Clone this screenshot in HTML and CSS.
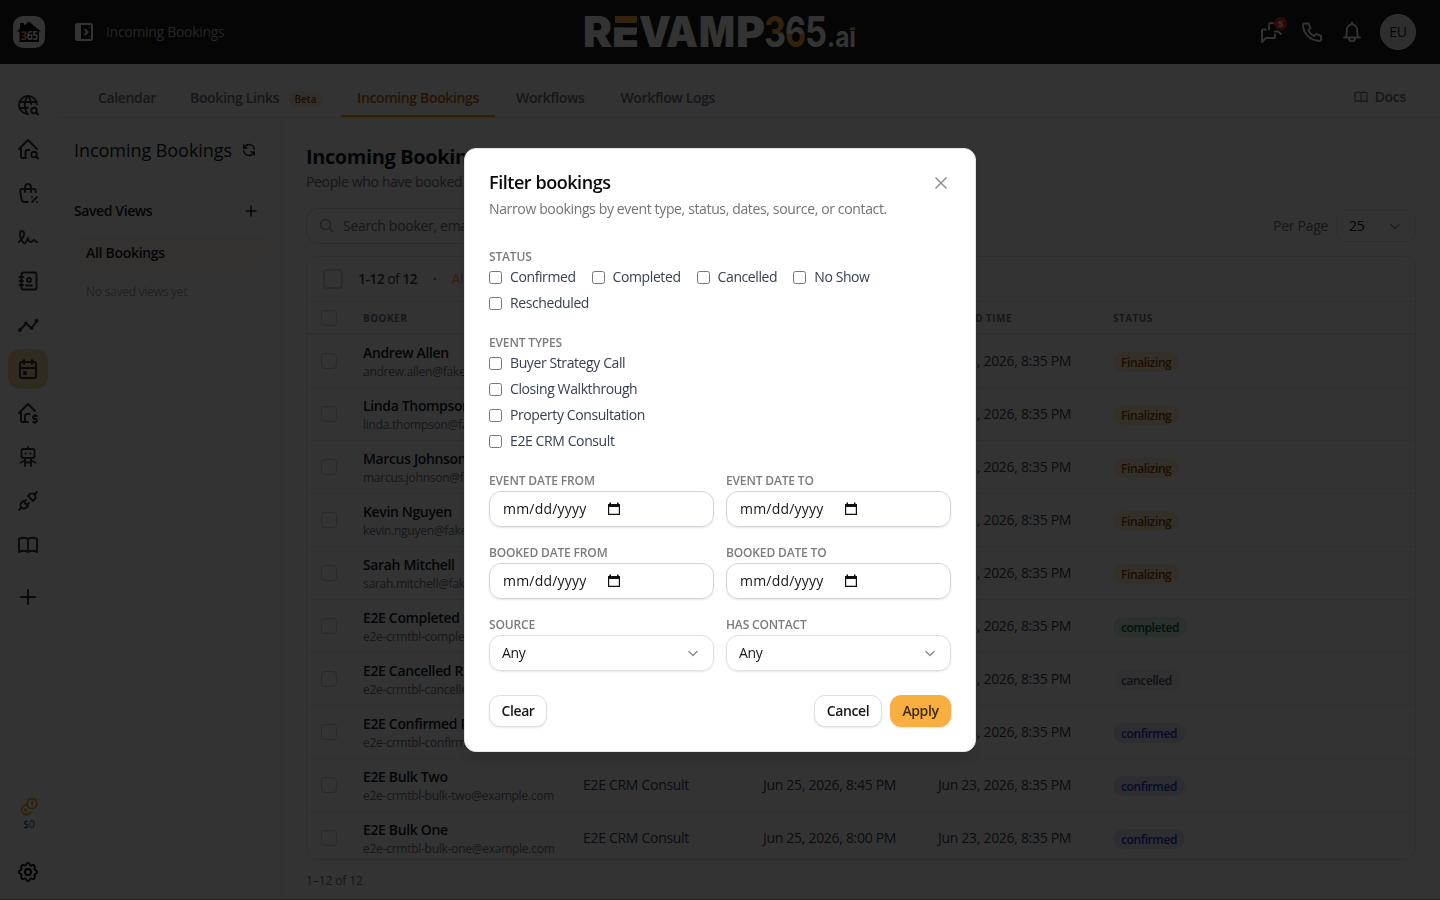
FILE: index.html
```html
<!DOCTYPE html>
<html lang="en">
<head>
<meta charset="utf-8">
<title>Incoming Bookings</title>
<link rel="stylesheet" href="styles.css">
</head>
<body>
<div class="app">
  <header class="topbar">
    <svg class="logo" width="32" height="32" viewBox="0 0 32 32"><rect width="32" height="32" rx="10" fill="#fff"/><path d="M4 15.500L7 12.500V7h4v2.500L16 5.500l12 10H26V26H6.500V15.500z" fill="#050505"/><text x="8" y="24" font-size="12" font-weight="700" textLength="17" lengthAdjust="spacingAndGlyphs" fill="#fff"><tspan fill="#f9ae41">3</tspan>65</text></svg>
    <svg class="panel-icon" width="18" height="18" viewBox="0 0 18 18"><rect x="1" y="1" width="16" height="16" rx="1.500" fill="none" stroke="#fff" stroke-width="2"/><path d="M1 1h5v16H1z" fill="#fff"/><path d="M9.500 6l3 3-3 3" fill="none" stroke="#fff" stroke-width="1.800"/></svg>
    <span class="crumb">Incoming Bookings</span>
    <svg class="brand" width="272" height="36" viewBox="584 14 272 36">
      <defs>
        <linearGradient id="three" gradientUnits="userSpaceOnUse" x1="0" y1="16" x2="0" y2="48"><stop offset=".56" stop-color="#f9ae41"/><stop offset=".56" stop-color="#fff"/></linearGradient>
        <linearGradient id="six" gradientUnits="userSpaceOnUse" x1="0" y1="16" x2="0" y2="48"><stop offset=".56" stop-color="#fff"/><stop offset=".56" stop-color="#f9ae41"/></linearGradient>
      </defs>
      <g class="wordmark">
        <text x="583" y="47" textLength="29" lengthAdjust="spacingAndGlyphs">R</text>
        <text x="612" y="47" textLength="27" lengthAdjust="spacingAndGlyphs">E</text>
        <text x="639" y="47" textLength="32" lengthAdjust="spacingAndGlyphs">V</text>
        <text x="666" y="47" textLength="32" lengthAdjust="spacingAndGlyphs">A</text>
        <text x="699" y="47" textLength="36" lengthAdjust="spacingAndGlyphs">M</text>
        <text x="736" y="47" textLength="29" lengthAdjust="spacingAndGlyphs">P</text>
      </g>
      <rect x="613" y="15" width="26" height="12.500" fill="#191919"/><rect x="615" y="16" width="22" height="7" fill="#f9ae41"/><rect x="615" y="27.500" width="22" height="5.500" fill="#fff"/>
      <g class="numerals">
        <text x="764" y="47" textLength="22" lengthAdjust="spacingAndGlyphs" fill="url(#three)">3</text>
        <text x="785" y="47" textLength="21" lengthAdjust="spacingAndGlyphs" fill="url(#six)">6</text>
        <text x="805" y="47" textLength="22" lengthAdjust="spacingAndGlyphs" fill="#fff">5</text>
      </g>
      <text class="suffix" x="827" y="46.500" textLength="29" lengthAdjust="spacingAndGlyphs">.ai</text>
      <path d="M849 23h7v7h-7z" fill="#191919"/><path d="M850 28.500l1-1.500h4v3h-5z" fill="#f9ae41"/>
    </svg>
    <div class="actions">
      <span class="chat"><svg class="ic" width="24" height="24" viewBox="0 0 24 24"><path d="M9 9.500V4.500C9 3.700 9.700 3 10.500 3H13M21 14l-3-2.500h-3M15 14.500V17a1 1 0 0 1-1 1H6l-4 4V10.500a1 1 0 0 1 1-1h3"/></svg><b class="count">5</b></span>
      <svg class="ic" width="24" height="24" viewBox="0 0 24 24"><path d="M8.500 3.500H4.500a1.500 1.500 0 0 0-1.500 1.600C3.600 14 10 20.400 19.200 21a1.600 1.600 0 0 0 1.800-1.600v-3.600l-4.600-2-2.400 2.400C11.800 15 9.500 12.700 8.200 10.400l2.400-2.300z"/></svg>
      <svg class="ic" width="24" height="24" viewBox="0 0 24 24"><path d="M12 2.500v1.800M4 17.500h16M5.500 17.500c1.200-1.500 1.300-3 1.300-7 0-3.700 2.200-6 5.200-6s5.200 2.300 5.200 6c0 4 .1 5.500 1.300 7M9 18c0 4.500 6 4.500 6 0"/></svg>
      <span class="avatar">EU</span>
    </div>
  </header>
  <div class="shell">
    <nav class="rail">
      <div class="rail-items">
        <span class="rail-item"><svg class="ic" width="24" height="24" viewBox="0 0 24 24"><path d="M21 11.500A9 9 0 1 0 12 21M3.600 9h16.800M3.600 15H12M11.500 3a17 17 0 0 0 0 18M12.500 3a17 17 0 0 1 2.500 8"/><circle cx="18" cy="17.500" r="2.800"/><path d="M20 19.500l2 2"/></svg></span>
        <span class="rail-item"><svg class="ic" width="24" height="24" viewBox="0 0 24 24"><path d="M21 12l-9-9-9 9h2v7a2 2 0 0 0 2 2h3M9.500 21v-6a2 2 0 0 1 2-2h2"/><circle cx="18" cy="17.500" r="2.800"/><path d="M20 19.500l2 2"/></svg></span>
        <span class="rail-item"><svg class="ic" width="24" height="24" viewBox="0 0 24 24"><path d="M12 21H8.500a3 3 0 0 1-3-2.600L4.200 10.300A2 2 0 0 1 6.200 8h11.600a2 2 0 0 1 2 2.300l-.2 1M9 11V6a3 3 0 0 1 6 0v5M16 21l5-5M16 16v.1M21 21v.1"/></svg></span>
        <span class="rail-item"><svg class="ic" width="24" height="24" viewBox="0 0 24 24"><path d="M3 17c3.300-3.300 5-6 5-8 0-3-1-3-2-3S4 7 4 9c0 3 1.500 6 2.500 7.500C8 18.500 9 19 10 17l2-4c.3 2.700 1.300 4 3 4 .5 0 2.500-2 3-2 .6 0 1.300 2 3 2"/></svg></span>
        <span class="rail-item"><svg class="ic" width="24" height="24" viewBox="0 0 24 24"><rect x="5.500" y="3.500" width="15" height="17" rx="2"/><path d="M10 16.500h6M3.500 8H7M3.500 12H7M3.500 16H7"/><circle cx="13" cy="11" r="2"/></svg></span>
        <span class="rail-item"><svg class="ic" width="24" height="24" viewBox="0 0 24 24"><path d="M4 17l6-6.500 5.500 4.500L21 8"/><g fill="#333"><circle cx="4" cy="17" r="1"/><circle cx="10" cy="10.500" r="1"/><circle cx="15.500" cy="15" r="1"/><circle cx="20.500" cy="8" r="1"/></g></svg></span>
        <span class="rail-item on"><svg class="ic" width="24" height="24" viewBox="0 0 24 24"><rect x="4" y="5" width="16" height="16" rx="2"/><path d="M16 3v4M8 3v4M4 11h16M8 15h2v2H8z"/></svg></span>
        <span class="rail-item"><svg class="ic" width="24" height="24" viewBox="0 0 24 24"><path d="M19 10l-7-7-9 9h2v7a2 2 0 0 0 2 2h5M9 21v-6a2 2 0 0 1 2-2h2.500M21 15h-2.500a1.500 1.500 0 0 0 0 3h1a1.500 1.500 0 0 1 0 3H17M19 21v1M19 14v1"/></svg></span>
        <span class="rail-item"><svg class="ic" width="24" height="24" viewBox="0 0 24 24"><rect x="5.500" y="4" width="13" height="9" rx="2"/><path d="M12 2v2M9 13v8M15 13v8M4.500 17.500L9 15.500M19.500 17.500L15 15.500M9 17.500h6M9.500 8.500v.2M14.500 8.500v.2"/></svg></span>
        <span class="rail-item"><svg class="ic" width="24" height="24" viewBox="0 0 24 24"><path d="M7 12l5 5-1.500 1.500a3.500 3.500 0 1 1-5-5zM17 12l-5-5 1.500-1.500a3.500 3.500 0 1 1 5 5zM3 21l2.500-2.500M18.500 5.500L21 3M10 11l-2 2M13 14l-2 2"/></svg></span>
        <span class="rail-item"><svg class="ic" width="24" height="24" viewBox="0 0 24 24"><path d="M3 19a9 9 0 0 1 9 0 9 9 0 0 1 9 0M3 6a9 9 0 0 1 9 0 9 9 0 0 1 9 0M3 6v13M12 6v13M21 6v13"/></svg></span>
        <span class="rail-item add"><svg class="ic" width="24" height="24" viewBox="0 0 24 24"><path d="M12 5v14M5 12h14"/></svg></span>
      </div>
      <div class="credits"><svg width="20" height="20" viewBox="0 0 20 20"><g class="coin"><circle cx="13" cy="6.500" r="5"/><path d="M7.500 8.200a4.800 4.800 0 1 0 4.500 6.300M12.500 4.500h.7v4M5 12.200l.8-.3 1.800 3"/></g></svg><span>$0</span></div>
      <div class="settings"><svg class="ic" width="24" height="24" viewBox="0 0 24 24"><path d="M10.300 4.300c.4-1.700 3-1.700 3.400 0a1.700 1.700 0 0 0 2.600 1.100c1.500-1 3.300.8 2.400 2.400a1.700 1.700 0 0 0 1 2.500c1.800.4 1.800 3 0 3.400a1.700 1.700 0 0 0-1 2.600c.9 1.500-.9 3.300-2.400 2.400a1.700 1.700 0 0 0-2.600 1c-.4 1.800-3 1.800-3.400 0a1.700 1.700 0 0 0-2.600-1c-1.500.9-3.300-.9-2.400-2.400a1.700 1.700 0 0 0-1-2.600c-1.800-.4-1.800-3 0-3.400a1.700 1.700 0 0 0 1-2.600c-.9-1.500.9-3.300 2.400-2.400 1 .6 2.300.1 2.600-1z"/><circle cx="12" cy="12" r="3"/></svg></div>
    </nav>
    <div class="page">
      <div class="tabs">
        <span class="tab t1">Calendar</span><span class="tab t2">Booking Links <em class="beta">Beta</em></span><span class="tab active">Incoming Bookings</span><span class="tab">Workflows</span><span class="tab">Workflow Logs</span>
        <span class="docs"><svg width="16" height="16" viewBox="0 0 24 24" class="ic thin"><path d="M3 19a9 9 0 0 1 9 0 9 9 0 0 1 9 0M3 6a9 9 0 0 1 9 0 9 9 0 0 1 9 0M3 6v13M12 6v13M21 6v13"/></svg>Docs</span>
      </div>
      <div class="columns">
        <aside class="views">
          <div class="views-head"><h2>Incoming Bookings</h2><svg class="ic" width="16" height="16" viewBox="0 0 24 24"><path d="M20 11A8 8 0 0 0 5 8M4 4v5h5M4 13a8 8 0 0 0 15 3M20 20v-5h-5"/></svg></div>
          <div class="views-body">
            <div class="saved"><span>Saved Views</span><svg class="ic" width="16" height="16" viewBox="0 0 16 16"><path class="fine" d="M8 3v10M3 8h10"/></svg></div>
            <div class="view-item">All Bookings</div>
            <div class="view-none">No saved views yet</div>
          </div>
        </aside>
        <main class="main">
          <h1>Incoming Bookings</h1>
          <p class="lead">People who have booked time with you</p>
          <div class="tools">
            <div class="search"><svg width="16" height="16" viewBox="0 0 16 16"><circle cx="6.500" cy="6.500" r="5"/><path d="M10.200 10.200L14 14"/></svg>Search booker, email</div>
            <div class="perpage">Per Page <span class="pp">25<svg class="chev" width="16" height="16" viewBox="0 0 16 16"><path d="M3.500 6L8 10.500 12.500 6"/></svg></span></div>
          </div>
          <div class="card">
            <div class="bulk"><i class="cb big"></i><span class="range"><b>1-12</b> of <b>12</b></span><span class="dot">·</span><span class="all">All</span></div>
            <div class="row thead"><span><i class="cb"></i></span><span>BOOKER</span><span>EVENT TYPE</span><span>EVENT TIME</span><span>BOOKED TIME</span><span>STATUS</span></div>
            <div class="row"><span><i class="cb"></i></span><span class="who"><b>Andrew Allen</b><small>andrew.allen@fake.com</small></span><span></span><span></span><span>Jun 23, 2026, 8:35 PM</span><span><em class="pill amber">Finalizing</em></span></div>
            <div class="row"><span><i class="cb"></i></span><span class="who"><b>Linda Thompson</b><small>linda.thompson@fake.com</small></span><span></span><span></span><span>Jun 23, 2026, 8:35 PM</span><span><em class="pill amber">Finalizing</em></span></div>
            <div class="row"><span><i class="cb"></i></span><span class="who"><b>Marcus Johnson</b><small>marcus.johnson@fake.com</small></span><span></span><span></span><span>Jun 23, 2026, 8:35 PM</span><span><em class="pill amber">Finalizing</em></span></div>
            <div class="row"><span><i class="cb"></i></span><span class="who"><b>Kevin Nguyen</b><small>kevin.nguyen@fake.com</small></span><span></span><span></span><span>Jun 23, 2026, 8:35 PM</span><span><em class="pill amber">Finalizing</em></span></div>
            <div class="row"><span><i class="cb"></i></span><span class="who"><b>Sarah Mitchell</b><small>sarah.mitchell@fake.com</small></span><span></span><span></span><span>Jun 23, 2026, 8:35 PM</span><span><em class="pill amber">Finalizing</em></span></div>
            <div class="row"><span><i class="cb"></i></span><span class="who"><b>E2E Completed</b><small>e2e-crmtbl-completed@example.com</small></span><span></span><span></span><span>Jun 23, 2026, 8:35 PM</span><span><em class="pill green">completed</em></span></div>
            <div class="row"><span><i class="cb"></i></span><span class="who"><b>E2E Cancelled R</b><small>e2e-crmtbl-cancelled@example.com</small></span><span></span><span></span><span>Jun 23, 2026, 8:35 PM</span><span><em class="pill gray">cancelled</em></span></div>
            <div class="row"><span><i class="cb"></i></span><span class="who"><b>E2E Confirmed R</b><small>e2e-crmtbl-confirmed@example.com</small></span><span></span><span></span><span>Jun 23, 2026, 8:35 PM</span><span><em class="pill blue">confirmed</em></span></div>
            <div class="row"><span><i class="cb"></i></span><span class="who"><b>E2E Bulk Two</b><small>e2e-crmtbl-bulk-two@example.com</small></span><span>E2E CRM Consult</span><span>Jun 25, 2026, 8:45 PM</span><span>Jun 23, 2026, 8:35 PM</span><span><em class="pill blue">confirmed</em></span></div>
            <div class="row"><span><i class="cb"></i></span><span class="who"><b>E2E Bulk One</b><small>e2e-crmtbl-bulk-one@example.com</small></span><span>E2E CRM Consult</span><span>Jun 25, 2026, 8:00 PM</span><span>Jun 23, 2026, 8:35 PM</span><span><em class="pill blue">confirmed</em></span></div>
          </div>
          <div class="foot">1–12 of 12</div>
        </main>
      </div>
    </div>
  </div>
</div>
<div class="overlay">
  <section class="modal">
    <div class="modal-head"><h3>Filter bookings</h3><svg width="16" height="16" viewBox="0 0 16 16"><path d="M2.500 2.500l11 11M13.500 2.500l-11 11"/></svg></div>
    <p class="desc">Narrow bookings by event type, status, dates, source, or contact.</p>
    <div class="label first">STATUS</div>
    <div class="checks">
      <label><i class="box"></i>Confirmed</label><label><i class="box"></i>Completed</label><label><i class="box"></i>Cancelled</label><label><i class="box"></i>No Show</label><label><i class="box"></i>Rescheduled</label>
    </div>
    <div class="label second">EVENT TYPES</div>
    <div class="checks stack">
      <label><i class="box"></i>Buyer Strategy Call</label><label><i class="box"></i>Closing Walkthrough</label><label><i class="box"></i>Property Consultation</label><label><i class="box"></i>E2E CRM Consult</label>
    </div>
    <div class="fields">
      <div><div class="label">EVENT DATE FROM</div><div class="input date"><span>mm/dd/yyyy</span><svg width="14" height="14" viewBox="0 0 14 14"><path d="M1 2h1.500V.5H4V2h6V.5h1.500V2H13v11H1zM2.200 5v6.800h9.600V5z" fill-rule="evenodd"/></svg></div></div>
      <div><div class="label">EVENT DATE TO</div><div class="input date"><span>mm/dd/yyyy</span><svg width="14" height="14" viewBox="0 0 14 14"><path d="M1 2h1.500V.5H4V2h6V.5h1.500V2H13v11H1zM2.200 5v6.800h9.600V5z" fill-rule="evenodd"/></svg></div></div>
      <div><div class="label">BOOKED DATE FROM</div><div class="input date"><span>mm/dd/yyyy</span><svg width="14" height="14" viewBox="0 0 14 14"><path d="M1 2h1.500V.5H4V2h6V.5h1.500V2H13v11H1zM2.200 5v6.800h9.600V5z" fill-rule="evenodd"/></svg></div></div>
      <div><div class="label">BOOKED DATE TO</div><div class="input date"><span>mm/dd/yyyy</span><svg width="14" height="14" viewBox="0 0 14 14"><path d="M1 2h1.500V.5H4V2h6V.5h1.500V2H13v11H1zM2.200 5v6.800h9.600V5z" fill-rule="evenodd"/></svg></div></div>
      <div><div class="label">SOURCE</div><div class="input pick"><span>Any</span><svg class="chev" width="16" height="16" viewBox="0 0 16 16"><path d="M3.500 6L8 10.500 12.500 6"/></svg></div></div>
      <div><div class="label">HAS CONTACT</div><div class="input pick"><span>Any</span><svg class="chev" width="16" height="16" viewBox="0 0 16 16"><path d="M3.500 6L8 10.500 12.500 6"/></svg></div></div>
    </div>
    <div class="buttons"><button class="btn clear">Clear</button><button class="btn cancel">Cancel</button><button class="btn primary">Apply</button></div>
  </section>
</div>
</body>
</html>
```

FILE: styles.css
```css
* { box-sizing: border-box; }
body { margin: 0; width: 1440px; height: 900px; overflow: hidden; font: 14px/20px "Segoe UI", "Open Sans", "Noto Sans", sans-serif; letter-spacing: -0.3px; color: #111827; background: #fff; }
h1, h2, h3, p { margin: 0; }
b { font-weight: 600; }
em, i { font-style: normal; }
svg { display: block; flex: none; }
.app { height: 900px; display: flex; flex-direction: column; border-bottom: 1px solid #d0a0a8; }
.ic { fill: none; stroke: currentColor; stroke-width: 1.900; stroke-linecap: round; stroke-linejoin: round; }
.thin { stroke-width: 1.800; }
.fine { stroke-width: 1.500; }

.topbar { height: 64px; flex: none; background: #191919; color: #fff; display: flex; align-items: center; padding: 0 24px 0 13px; }
.panel-icon { margin-left: 30px; }
.crumb { margin-left: 13px; width: 120px; white-space: nowrap; color: #b8b8b8; }
.brand { margin-left: 358px; overflow: visible; }
.wordmark { font: 900 43px Inter, sans-serif; fill: #fff; letter-spacing: 0; }
.numerals { font: 700 43px Inter, sans-serif; letter-spacing: 0; }
.suffix { font: 700 29px Inter, sans-serif; fill: #fff; letter-spacing: 0; }
.actions { margin-left: auto; display: flex; align-items: center; gap: 16px; }
.actions .ic { stroke-width: 1.900; }
.chat { position: relative; }
.count { position: absolute; left: 14px; top: -3px; width: 13px; height: 13px; border-radius: 50%; background: #fb2c36; font-size: 9px; line-height: 13px; text-align: center; letter-spacing: 0; font-weight: 700; }
.avatar { width: 36px; height: 36px; border-radius: 50%; background: #e5e5e5; border: 1px solid #fff; color: #111827; text-align: center; line-height: 34px; }

.shell { flex: 1; display: flex; min-height: 0; }
.rail { width: 58px; border-right: 1px solid #f2f2f2; display: flex; flex-direction: column; color: #333; }
.rail-items { height: 718px; padding: 21px 0 0 8px; display: flex; flex-direction: column; gap: 4px; border-bottom: 1px solid #f2f2f2; }
.rail-item { width: 40px; height: 40px; border-radius: 12px; display: flex; align-items: center; justify-content: center; }
.rail-item.on { background: #f5d29a; }
.rail-item.add { margin-top: 8px; }
.credits { height: 61px; padding: 15px 0 0 1px; display: flex; flex-direction: column; align-items: center; font-size: 10px; line-height: 14px; border-bottom: 1px solid #f2f2f2; letter-spacing: 0; color: #364153; }
.coin { fill: none; stroke: #f59e0b; stroke-width: 1.700; }
.settings { display: flex; justify-content: center; padding: 17px 1px 0 0; color: #000; }

.page { flex: 1; min-width: 0; display: flex; flex-direction: column; }
.tabs { height: 54px; flex: none; border-bottom: 1px solid #e9e9e9; display: flex; padding: 16px 34px 0 24px; font-weight: 600; color: #6a7282; }
.tab { padding: 8px 16px 0; height: 37px; margin-right: 4px; letter-spacing: -.35px; white-space: nowrap; }
.tab.t1 { width: 88px; }
.tab.t2 { width: 163px; }
.tab.active { color: #c2620a; border-bottom: 2px solid #ff9500; width: 154px; margin-right: 5px; }
.beta { margin-left: 6px; padding: 1px 6px; border-radius: 10px; background: #fcefd8; color: #973c00; font-size: 10px; letter-spacing: 0; }
.docs { margin-left: auto; display: flex; align-items: center; gap: 6px; height: 34px; }

.columns { flex: 1; display: flex; min-height: 0; }
.views { width: 224px; border-right: 1px solid #efefef; }
.views-head { height: 65px; padding: 0 24px 0 16px; display: flex; justify-content: space-between; align-items: center; border-bottom: 1px solid #f2f2f2; }
h2 { font-size: 18px; font-weight: 500; letter-spacing: -.05px; }
.views-body { height: 165px; padding: 18px 16px; border-bottom: 1px solid #f2f2f2; }
.saved { display: flex; justify-content: space-between; align-items: center; font-weight: 600; padding-right: 6px; letter-spacing: -.4px; }
.view-item { margin-top: 14px; height: 35px; padding: 8px 12px; background: #fff9ef; border-radius: 6px; font-weight: 600; }
.view-none { margin-top: 12px; padding-left: 12px; font-size: 12px; color: #99a1af; letter-spacing: -.25px; }

.main { flex: 1; min-width: 0; padding: 25px 24px 0; }
h1 { font-size: 20px; line-height: 28px; font-weight: 700; letter-spacing: -.4px; }
.lead { color: #6a7282; margin-top: 1px; letter-spacing: -.35px; }
.tools { margin-top: 16px; display: flex; justify-content: space-between; height: 36px; }
.search { width: 380px; height: 36px; border: 1px solid #dadada; border-radius: 12px; display: flex; align-items: center; padding-left: 12px; gap: 8px; color: #737373; }
.search svg { fill: none; stroke: #99a1af; stroke-width: 1.400; }
.perpage { display: flex; align-items: center; gap: 8px; color: #737373; }
.pp { width: 80px; height: 32px; border: 1px solid #e5e5e5; border-radius: 10px; padding: 0 12px; display: flex; align-items: center; justify-content: space-between; color: #111; }
.chev { fill: none; stroke: #8a8a8a; stroke-width: 1.300; }
.card { margin-top: 12px; height: 604px; border: 1px solid #e5e5e5; border-radius: 12px; overflow: hidden; }
.bulk { height: 45px; display: flex; align-items: center; padding-left: 16px; border-bottom: 1px solid #f0f0f0; color: #364153; }
.bulk span { margin-left: 15px; }
.bulk .range { width: 60px; white-space: nowrap; letter-spacing: -.6px; }
.bulk .all { color: #f59e0b; }
.cb { display: block; width: 16px; height: 16px; border: 1px solid #ccc; border-radius: 4px; }
.cb.big { width: 20px; height: 20px; border-width: 2px; border-color: #d1d5dc; }
.row { height: 53px; display: grid; grid-template-columns: 42px 220px 180px 175px 175px 1fr; align-items: center; padding-left: 14px; border-bottom: 1px solid #f0f0f0; color: #364153; white-space: nowrap; }
.thead { height: 33px; font-size: 10px; font-weight: 700; letter-spacing: .45px; color: #6a7282; border-bottom: 2px solid #e8e8e8; }
.who { display: flex; flex-direction: column; color: #101828; padding-top: 1px; }
.who small { font-size: 12px; line-height: 17px; color: #6a7282; letter-spacing: -.26px; }
.who b { letter-spacing: -.35px; }
.pill { display: inline-block; height: 20px; line-height: 21px; padding: 0 8px; border-radius: 10px; font-size: 12px; font-weight: 600; letter-spacing: -.4px; vertical-align: middle; }
.amber { background: #fcf0cc; color: #973c00; }
.green { background: #d4f2e2; color: #006045; }
.gray { background: #f3f4f6; color: #4a5565; }
.blue { background: #dce7fa; color: #1d39c4; }
.foot { margin-top: 11px; font-size: 12px; color: #737373; letter-spacing: -.1px; }

.overlay { position: fixed; inset: 0; background: rgba(0, 0, 0, .8); display: flex; align-items: center; justify-content: center; }
.modal { width: 512px; height: 604px; background: #fff; border: 1px solid #e5e5e5; border-radius: 12px; padding: 24px; color: #171717; box-shadow: 0 10px 15px rgba(0, 0, 0, .1); }
.modal-head { display: flex; justify-content: space-between; align-items: center; height: 20px; padding-right: 2px; }
.modal-head svg { fill: none; stroke: #8a8a8a; stroke-width: 1.400; }
h3 { font-size: 18px; font-weight: 600; letter-spacing: -.45px; color: #0a0a0a; padding-bottom: 2px; }
.desc { margin-top: 6px; color: #737373; letter-spacing: -.36px; }
.label { font-size: 12px; line-height: 16px; font-weight: 600; color: #7c7c7c; letter-spacing: -.15px; }
.label.first { margin-top: 30px; }
.label.second { margin-top: 22px; }
.checks { margin-top: 2px; display: flex; flex-wrap: wrap; gap: 6px 16px; color: #364153; letter-spacing: -.4px; }
.checks label { display: flex; align-items: center; gap: 8px; }
.checks.stack { flex-direction: column; }
.box { width: 13px; height: 13px; border: 1px solid #767676; border-radius: 2.500px; background: #fff; }
.fields { margin-top: 22px; display: grid; grid-template-columns: 225px 225px; gap: 18px 12px; }
.fields .label { margin-bottom: 2px; }
.input { height: 36px; border: 1px solid #d1d5dc; border-radius: 12px; display: flex; align-items: center; box-shadow: 0 1px 2px rgba(0, 0, 0, .1); }
.date { padding-left: 13px; }
.date span { width: 104px; letter-spacing: .2px; }
.date svg { fill: #111; }
.pick { border-color: #e0e0e0; padding: 0 12px; justify-content: space-between; }
.buttons { margin-top: 24px; display: flex; gap: 8px; }
.btn { height: 32px; border: 1px solid #e0e0e0; border-radius: 11px; padding: 0; background: #fff; font: inherit; font-weight: 600; letter-spacing: -.4px; color: #171717; box-shadow: 0 1px 2px rgba(0, 0, 0, .1); }
.clear { width: 58px; margin-right: auto; }
.cancel { width: 68px; }
.primary { width: 61px; background: #f9ae41; border-color: #f9ae41; color: #3b2a10; }
```
